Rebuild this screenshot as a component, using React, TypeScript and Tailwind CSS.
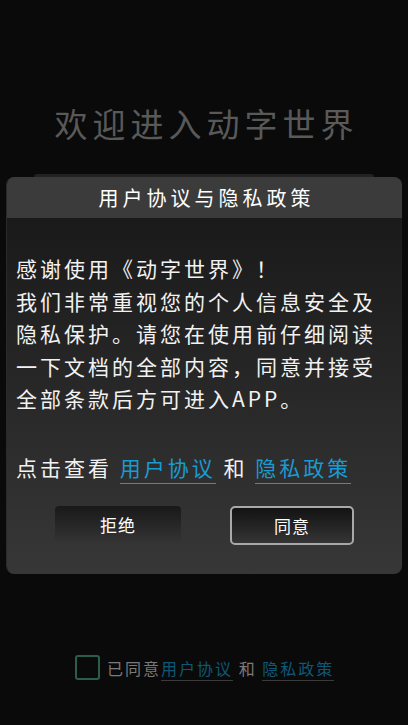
import React from 'react'

const cjk = { fontFamily: '"Noto Sans CJK SC", "Noto Sans", sans-serif' }

export default function App() {
  return (
    <div className="w-[408px] h-[725px] bg-[#0a0a0a] flex flex-col overflow-hidden" style={cjk}>
      {/* Title */}
      <h1 className="mt-[102px] text-center text-[33px] leading-[42px] tracking-[5px] pl-[5px] text-[#595959]">
        欢迎进入动字世界
      </h1>

      {/* Dialog */}
      <div className="mt-[30px] mx-[34px] h-[3px] rounded-t-[4px] bg-[#222222]" />
      <div className="mx-[6px] rounded-[8px] overflow-hidden border-l border-[#2a2a2a]">
        <div className="h-[41px] bg-[#3b3b3b] flex items-center justify-center text-[20px] tracking-[4px] pl-[4px] text-white">
          用户协议与隐私政策
        </div>
        <div className="h-[356px] bg-gradient-to-b from-[#1a1a1a] to-[#373737] px-[9px] pt-[34px]">
          <p className="text-[21px] leading-[32.6px] tracking-[3px] text-[#f2f2f2]">
            感谢使用《动字世界》！
            <br />
            我们非常重视您的个人信息安全及隐私保护。请您在使用前仔细阅读一下文档的全部内容，同意并接受全部条款后方可进入APP。
          </p>
          <p className="mt-[36px] text-[21px] leading-[32px] tracking-[3px] text-[#f2f2f2]">
            点击查看{' '}
            <span className="text-[#1b9ad2] border-b border-[#7a7a7a] pb-[1px]">用户协议</span>
            {' '}和{' '}
            <span className="text-[#1b9ad2] border-b border-[#7a7a7a] pb-[1px]">隐私政策</span>
          </p>
          <div className="mt-[23px] flex pl-[39px] gap-[49px]">
            <button className="w-[126px] h-[38px] rounded-[4px] bg-gradient-to-b from-[#191919] to-[#353535] text-white text-[17px] tracking-[1px]">
              拒绝
            </button>
            <button className="w-[124px] h-[39px] rounded-[5px] border-2 border-[#a9a9a9] bg-gradient-to-b from-[#131313] to-[#353535] text-white text-[17px] tracking-[1px]">
              同意
            </button>
          </div>
        </div>
      </div>

      {/* Agreement checkbox */}
      <div className="mt-[81px] flex items-center pl-[75px]">
        <div className="w-[25px] h-[25px] rounded-[3px] border-2 border-[#2c5d4a]" />
        <span className="ml-[7px] text-[16px] tracking-[2px] text-[#7a7a7a]">
          已同意
          <span className="text-[#0d5877] border-b border-[#3a3a3a]">用户协议</span>
          {' '}和{' '}
          <span className="text-[#0d5877] border-b border-[#3a3a3a]">隐私政策</span>
        </span>
      </div>
    </div>
  )
}
